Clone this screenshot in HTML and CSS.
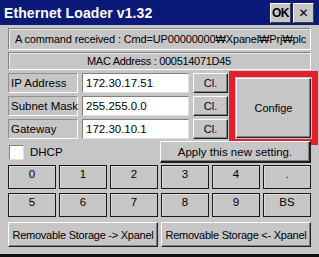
FILE: index.html
```html
<!DOCTYPE html>
<html lang="en">
<head>
    <meta charset="UTF-8">
    <title>Ethernet Loader</title>
    <link rel="stylesheet" href="styles.css">
</head>
<body>
    <div class="window">
        <div class="titlebar">
            <span class="title">Ethernet Loader v1.32</span>
            <div class="title-buttons">
                <button class="tbtn ok">OK</button>
                <button class="tbtn close">&#x2715;</button>
            </div>
        </div>
        <div class="content">
            <div class="info cmd">A command received : Cmd=UP00000000₩Xpanel₩Prj₩plc<br>l_E | TEST.HEP</div>
            <div class="info mac">MAC Address : 000514071D45</div>

            <div class="network">
                <div class="fields">
                    <div class="field-row">
                        <div class="label">IP Address</div>
                        <div class="value">172.30.17.51</div>
                        <button class="btn cl">Cl.</button>
                    </div>
                    <div class="field-row">
                        <div class="label">Subnet Mask</div>
                        <div class="value">255.255.0.0</div>
                        <button class="btn cl">Cl.</button>
                    </div>
                    <div class="field-row">
                        <div class="label">Gateway</div>
                        <div class="value">172.30.10.1</div>
                        <button class="btn cl">Cl.</button>
                    </div>
                </div>
                <div class="config-wrap">
                    <button class="btn config">Confige</button>
                </div>
            </div>

            <div class="dhcp-row">
                <label class="dhcp"><span class="check"></span>DHCP</label>
                <button class="btn apply">Apply this new setting.</button>
            </div>

            <div class="keypad">
                <button class="key">0</button>
                <button class="key">1</button>
                <button class="key">2</button>
                <button class="key">3</button>
                <button class="key">4</button>
                <button class="key">.</button>
                <button class="key">5</button>
                <button class="key">6</button>
                <button class="key">7</button>
                <button class="key">8</button>
                <button class="key">9</button>
                <button class="key">BS</button>
            </div>

            <div class="storage">
                <button class="btn store">Removable Storage -&gt; Xpanel</button>
                <button class="btn store">Removable Storage &lt;- Xpanel</button>
            </div>
        </div>
    </div>
</body>
</html>
```

FILE: styles.css
```css
body {
    margin: 0;
    padding: 0;
    background: #c6c6c6;
    font-family: 'Liberation Sans', 'DejaVu Sans', sans-serif;
    font-size: 11px;
    color: #000;
}

button {
    font-family: inherit;
    font-size: 11px;
    color: #000;
    padding: 0;
    margin: 0;
    cursor: pointer;
    white-space: nowrap;
}

.window {
    width: 319px;
    height: 257px;
    display: flex;
    flex-direction: column;
    box-sizing: border-box;
    border-bottom: 3px solid #101010;
    overflow: hidden;
}

.titlebar {
    height: 25px;
    background: #0b1a78;
    display: flex;
    align-items: center;
    justify-content: space-between;
    padding: 0 5px 0 4px;
    flex-shrink: 0;
}

.title {
    color: #fff;
    font-weight: bold;
    font-size: 14px;
    letter-spacing: 0.1px;
}

.title-buttons {
    display: flex;
    gap: 2px;
}

.tbtn {
    width: 21px;
    height: 20px;
    background: #c6c6c6;
    border: 1px solid;
    border-color: #fff #404040 #404040 #fff;
    font-weight: bold;
    font-size: 12px;
    line-height: 18px;
    letter-spacing: -0.5px;
}

.tbtn.close {
    font-weight: normal;
    font-size: 12px;
    letter-spacing: 0;
}

.content {
    flex: 1;
    padding: 3px 8px 0 8px;
    display: flex;
    flex-direction: column;
}

.info {
    border: 1px solid;
    border-color: #808080 #fff #fff #808080;
    box-shadow: inset 1px 1px 0 #e8e8e8;
    overflow: hidden;
    white-space: nowrap;
}

.cmd {
    height: 17px;
    padding: 3px 0 0 6px;
    line-height: 14px;
    letter-spacing: -0.15px;
}

.mac {
    margin-top: 2px;
    height: 16px;
    line-height: 16px;
    padding-left: 78px;
    letter-spacing: -0.3px;
}

.network {
    display: flex;
    margin-top: 3px;
}

.fields {
    display: flex;
    flex-direction: column;
    gap: 3px;
}

.field-row {
    display: flex;
    gap: 4px;
    height: 20px;
}

.label {
    width: 66px;
    border: 1px solid;
    border-color: #909090 #fff #fff #909090;
    line-height: 18px;
    padding-left: 2px;
    white-space: nowrap;
    font-size: 11.5px;
}

.value {
    width: 102px;
    background: #fff;
    border: 1px solid;
    border-color: #808080 #e0e0e0 #e0e0e0 #808080;
    line-height: 18px;
    padding-left: 3px;
    font-size: 11.5px;
}

.btn {
    background: #c6c6c6;
    border: 1px solid;
    border-color: #fff #202020 #202020 #fff;
    box-shadow: inset -1px -1px 0 #808080;
}

.cl {
    width: 35px;
    height: 20px;
}

.config-wrap {
    flex: 1;
    display: flex;
    padding: 5px 0 1px 8px;
}

.config {
    flex: 1;
    outline: 6px solid #e41e2a;
    outline-offset: 1px;
}

.dhcp-row {
    display: grid;
    grid-template-columns: 152px 1fr;
    align-items: center;
    margin-top: 2px;
    height: 22px;
}

.dhcp {
    display: flex;
    align-items: center;
    gap: 6px;
    padding-left: 1px;
    font-size: 11.5px;
}

.check {
    width: 13px;
    height: 13px;
    background: #fff;
    border: 1px solid;
    border-color: #808080 #e0e0e0 #e0e0e0 #808080;
}

.apply {
    height: 22px;
    border-right-width: 2px;
    border-bottom-width: 2px;
    font-size: 11.5px;
}

.keypad {
    display: grid;
    grid-template-columns: repeat(6, 1fr);
    grid-auto-rows: 24px;
    gap: 4px 3px;
    margin-top: 2px;
}

.key {
    background: #c6c6c6;
    border: 1px solid #1a1a1a;
    box-shadow: inset 1px 1px 0 #dcdcdc;
    display: flex;
    justify-content: center;
    align-items: flex-start;
    padding-top: 2px;
    font-size: 11.5px;
}

.storage {
    display: flex;
    gap: 3px;
    margin-top: 5px;
    height: 25px;
}

.store {
    flex: 1 1 0;
    min-width: 0;
    overflow: hidden;
    letter-spacing: -0.25px;
}
```
